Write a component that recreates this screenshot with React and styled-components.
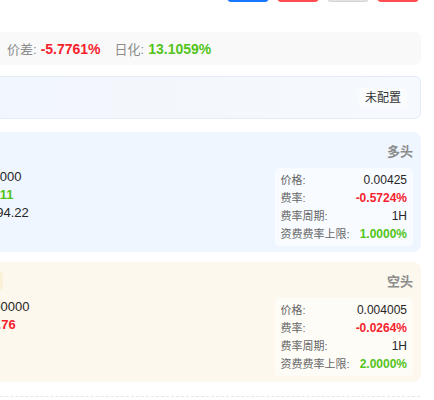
import React from 'react';
import styled, { createGlobalStyle } from 'styled-components';

const GlobalStyle = createGlobalStyle`
  body {
    margin: 0;
    background: #fff;
    overflow: hidden;
    font-family: "Liberation Sans", "Noto Sans CJK SC", sans-serif;
    color: #262626;
  }
`;

const RED = '#f5222d';
const GREEN = '#52c41a';

const Page = styled.div`
  width: 481px;
  margin-left: -60px;
  display: flex;
  flex-direction: column;
`;

const Toolbar = styled.div`
  display: flex;
  justify-content: flex-end;
  gap: 8px;
  padding-right: 2px;
  margin-top: -22px;
`;

const buttonTones = {
  primary: { bg: '#1677ff', border: '#1677ff', color: '#fff' },
  danger: { bg: '#ff4d4f', border: '#ff4d4f', color: '#fff' },
  muted: { bg: '#e3e3e3', border: '#d4d4d4', color: '#999' },
};

const ActionButton = styled.button`
  width: 42px;
  height: 24px;
  padding: 0;
  border-radius: 4px;
  font-size: 12px;
  font-family: inherit;
  border: 1px solid ${p => buttonTones[p.tone].border};
  background: ${p => buttonTones[p.tone].bg};
  color: ${p => buttonTones[p.tone].color};
`;

const StatsBar = styled.div`
  margin-top: 30px;
  height: 33px;
  display: flex;
  align-items: center;
  gap: 14px;
  padding-left: 67px;
  background: #f9f9f9;
  border-radius: 6px;
  font-size: 13px;
`;

const Stat = styled.span`
  color: #8c8c8c;
  white-space: nowrap;
`;

const StatValue = styled.b`
  margin-left: 4px;
  color: ${p => p.color};
  font-weight: 700;
  font-size: 14px;
`;

const ConfigBar = styled.div`
  margin-top: 11px;
  height: 43px;
  box-sizing: border-box;
  display: flex;
  align-items: center;
  justify-content: flex-end;
  padding-right: 13px;
  border: 1px solid #e3ecf8;
  border-radius: 6px;
  background: linear-gradient(90deg, #f1f6fd, #f6f9fd);
`;

const StatusTag = styled.span`
  height: 20px;
  line-height: 20px;
  padding: 0 6px;
  border-radius: 4px;
  background: #fafbfd;
  font-size: 12px;
  color: #333;
`;

const sideTones = {
  long: { bg: '#eff6ff', tag: '#e2eefc' },
  short: { bg: '#fdf8ee', tag: '#fbf0d8' },
};

const Card = styled.div`
  margin-top: ${p => p.gap}px;
  height: 120px;
  box-sizing: border-box;
  display: flex;
  justify-content: space-between;
  padding: 10px 8px 6px 12px;
  border-radius: 8px;
  background: ${p => sideTones[p.side].bg};
`;

const LeftColumn = styled.div`
  display: flex;
  flex-direction: column;
  align-items: flex-start;
  gap: 8px;
`;

const ExchangeTag = styled.span`
  height: 18px;
  line-height: 18px;
  padding: 0 8px;
  border-radius: 4px;
  font-size: 12px;
  color: #666;
  background: ${p => sideTones[p.side].tag};
`;

const Figures = styled.div`
  display: grid;
  grid-template-columns: ${p => p.labelWidth}px auto;
  column-gap: 6px;
  font-size: 13px;
  line-height: 18px;
`;

const FigureLabel = styled.span`
  color: #8c8c8c;
  white-space: nowrap;
`;

const FigureValue = styled.span`
  color: ${p => p.color || '#262626'};
  font-weight: ${p => (p.color ? 700 : 400)};
`;

const RightColumn = styled.div`
  display: flex;
  flex-direction: column;
  align-items: flex-end;
`;

const SideTitle = styled.div`
  line-height: 20px;
  font-size: 13px;
  font-weight: 600;
  color: #8c8c8c;
`;

const InfoBox = styled.div`
  margin-top: 6px;
  padding: 3px 6px;
  display: grid;
  grid-template-columns: auto auto;
  column-gap: 6px;
  border-radius: 4px;
  background: rgba(255, 255, 255, 0.55);
  line-height: 18px;
`;

const InfoLabel = styled.span`
  font-size: 11px;
  color: #666;
`;

const InfoValue = styled.span`
  text-align: right;
  font-size: 12px;
  color: ${p => p.color || '#262626'};
  font-weight: ${p => (p.color ? 700 : 400)};
`;

const Divider = styled.div`
  margin-top: 14px;
  width: 480px;
  border-top: 1px dashed #e6e6e6;
`;

const legs = [
  {
    side: 'long',
    title: '多头',
    exchange: 'OKX',
    labelWidth: 31,
    figures: [
      { label: '数量:', value: '1,000' },
      { label: '盈亏:', value: '0.11', color: GREEN },
      { label: '价值:', value: '594.22' },
    ],
    price: '0.00425',
    rate: '-0.5724%',
    period: '1H',
    cap: '1.0000%',
  },
  {
    side: 'short',
    title: '空头',
    exchange: 'MEXC',
    labelWidth: 28,
    figures: [
      { label: '数量:', value: '100000' },
      { label: '盈亏:', value: '-0.76', color: RED },
    ],
    price: '0.004005',
    rate: '-0.0264%',
    period: '1H',
    cap: '2.0000%',
  },
];

const LegCard = ({ leg, gap }) => (
  <Card side={leg.side} gap={gap}>
    <LeftColumn>
      <ExchangeTag side={leg.side}>{leg.exchange}</ExchangeTag>
      <Figures labelWidth={leg.labelWidth}>
        {leg.figures.map(f => (
          <React.Fragment key={f.label}>
            <FigureLabel>{f.label}</FigureLabel>
            <FigureValue color={f.color}>{f.value}</FigureValue>
          </React.Fragment>
        ))}
      </Figures>
    </LeftColumn>
    <RightColumn>
      <SideTitle>{leg.title}</SideTitle>
      <InfoBox>
        <InfoLabel>价格:</InfoLabel>
        <InfoValue>{leg.price}</InfoValue>
        <InfoLabel>费率:</InfoLabel>
        <InfoValue color={RED}>{leg.rate}</InfoValue>
        <InfoLabel>费率周期:</InfoLabel>
        <InfoValue>{leg.period}</InfoValue>
        <InfoLabel>资费费率上限:</InfoLabel>
        <InfoValue color={GREEN}>{leg.cap}</InfoValue>
      </InfoBox>
    </RightColumn>
  </Card>
);

export default function App() {
  return (
    <>
      <GlobalStyle />
      <Page>
        <Toolbar>
          <ActionButton tone="primary">编辑</ActionButton>
          <ActionButton tone="danger">平仓</ActionButton>
          <ActionButton tone="muted">暂停</ActionButton>
          <ActionButton tone="danger">删除</ActionButton>
        </Toolbar>
        <StatsBar>
          <Stat>
            价差:<StatValue color={RED}>-5.7761%</StatValue>
          </Stat>
          <Stat>
            日化:<StatValue color={GREEN}>13.1059%</StatValue>
          </Stat>
        </StatsBar>
        <ConfigBar>
          <StatusTag>未配置</StatusTag>
        </ConfigBar>
        <LegCard leg={legs[0]} gap={13} />
        <LegCard leg={legs[1]} gap={10} />
        <Divider />
      </Page>
    </>
  );
}
